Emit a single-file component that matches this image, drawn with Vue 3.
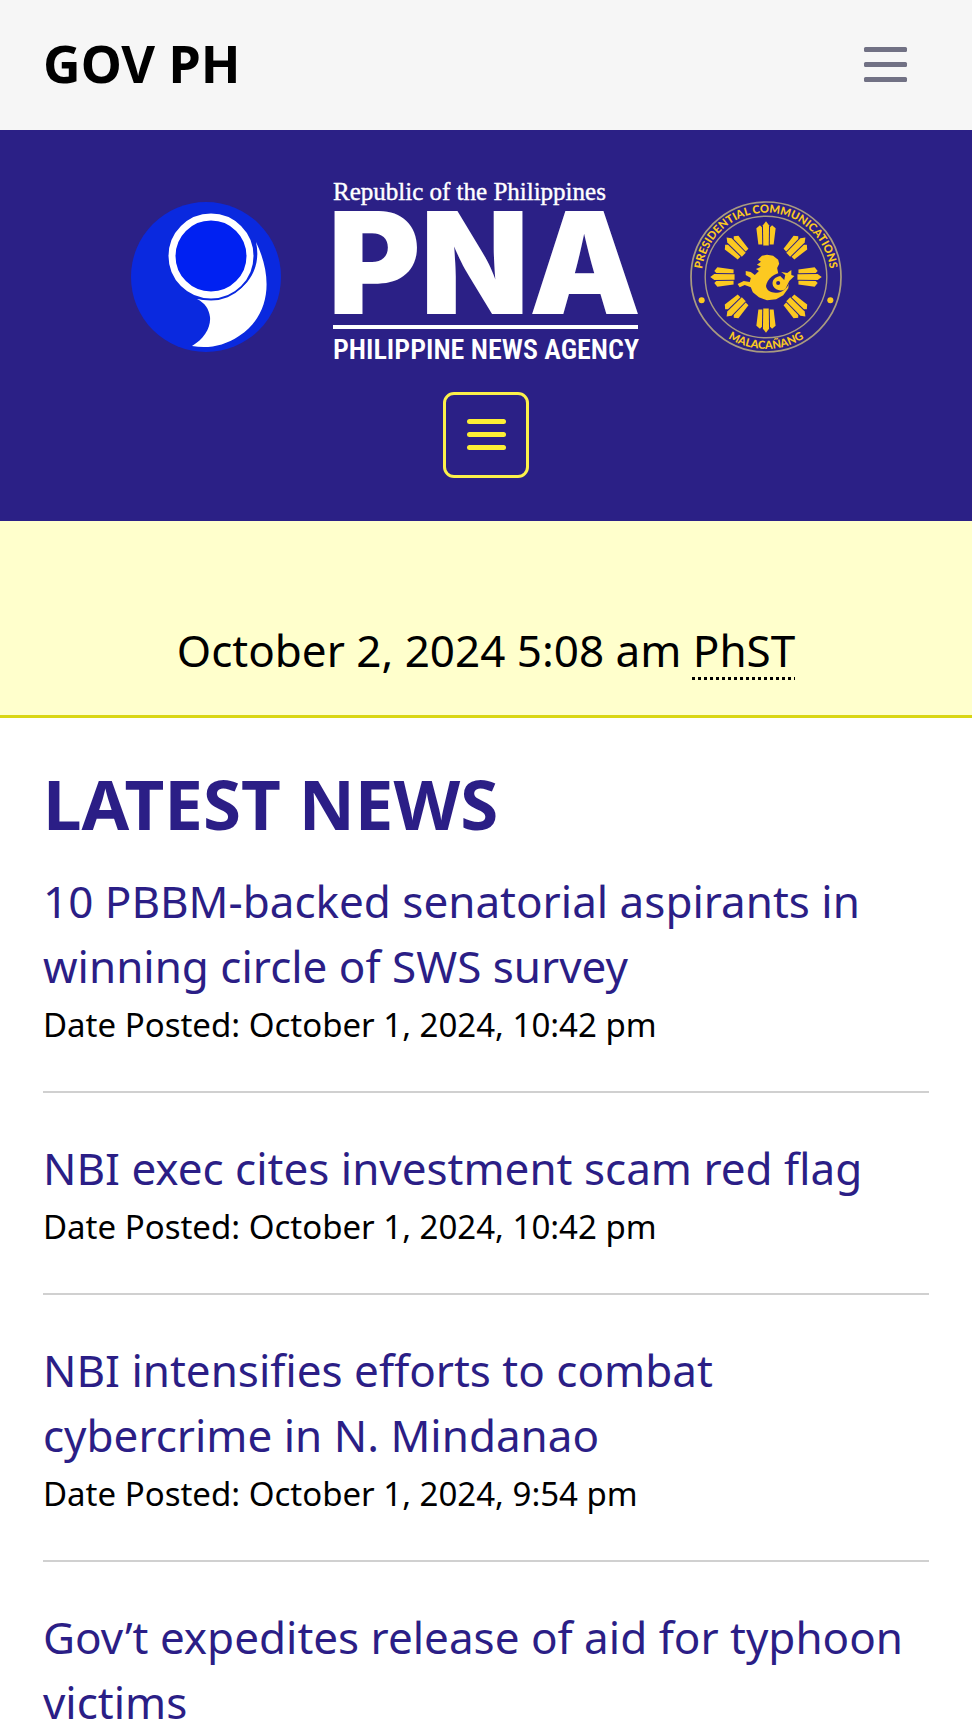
<template>
  <div class="page">
    <!-- Top bar -->
    <header class="topbar">
      <a class="topbar-brand" href="#">GOV PH</a>
      <button class="topbar-toggle" type="button" aria-label="Toggle GOV PH menu" @click="govOpen = !govOpen">
        <svg viewBox="0 0 43 35" width="43" height="35">
          <rect v-for="y in [0, 15, 30]" :key="y" x="0" :y="y" width="43" height="5" rx="1.5" fill="#717184" />
        </svg>
      </button>
    </header>

    <!-- Masthead -->
    <div class="masthead">
      <a class="logos" href="#" aria-label="Philippine News Agency">
        <svg class="emblem" viewBox="0 0 150 150">
          <circle cx="75" cy="75" r="75" fill="#0a29df" />
          <path
            d="M125 40 C142 75 140 113 108 134 C93 144 77 147 61 144 C73 137 80 126 79 115 C78 107 74 101 66 97 C103 103 133 76 125 40 Z"
            fill="#fff"
          />
          <circle cx="80" cy="55" r="43.5" fill="#0a29df" />
          <circle cx="80" cy="54" r="39" fill="#0021f2" stroke="#fff" stroke-width="7" />
        </svg>

        <svg class="wordmark" viewBox="0 0 305 194">
          <g fill="#fff">
            <text class="wm-top" x="0" y="20">Republic of the Philippines</text>
            <text class="wm-main" x="-5" y="134">PNA</text>
            <rect x="0" y="145" width="305" height="4" />
            <text class="wm-bottom" x="0" y="179">PHILIPPINE NEWS AGENCY</text>
          </g>
        </svg>

        <svg class="emblem seal" viewBox="0 0 150 150">
          <defs>
            <path id="seal-top" d="M 11.5 75 A 63.5 63.5 0 0 1 138.500 75" />
            <path id="seal-bottom" d="M 4 75 A 71 71 0 0 0 146 75" />
          </defs>
          <g fill="none" stroke="#a99a80">
            <circle cx="75" cy="75" r="74" stroke-width="1.7" />
            <circle cx="75" cy="75" r="60" stroke-width="1.4" />
          </g>
          <g fill="#fcc921">
            <text class="seal-text" text-anchor="middle">
              <textPath href="#seal-top" startOffset="50%">PRESIDENTIAL COMMUNICATIONS</textPath>
            </text>
            <text class="seal-text" text-anchor="middle">
              <textPath href="#seal-bottom" startOffset="50%">MALACAÑANG</textPath>
            </text>
            <circle cx="11.500" cy="98" r="3" />
            <circle cx="138.500" cy="98" r="3" />
            <!-- sun rays -->
            <g v-for="a in rays" :key="a" :transform="`rotate(${a} 75 75)`">
              <path d="M72.300 44 L72 24 L75 20 L78 24 L77.700 44 Z" />
              <path d="M65.500 27 L69 24 L71 26 L71.300 43 L67.500 43 Z" />
              <path d="M84.500 27 L81 24 L79 26 L78.700 43 L82.500 43 Z" />
            </g>
            <!-- sea lion -->
            <path
              d="M67 58 L71 54 L76 53 L82 54 L87 58 L88 62 L86 66 L87 71 L98 76 L97 86 L92 93 L85 97 L76 98 L68 95 L62 90 L60 85 L54 83 L49 85 L47 82 L53 79 L59 80 L60 76 L55 73 L55 69 L60 70 L64 73 L68 69 L65 67 L70 65 L66 63 L70 60 Z"
            />
            <path
              d="M92 70 C83 71 76 77 75 84 C76 91 85 92 91 89 C96 86 98 82 101 74 Z"
              fill="#2b2086"
            />
            <path d="M82 84 C80 78 84 75 89 74 L93 78 L94 73 L90 70 L96 71 L100 68 L100 73 L103 74 L98 79 L94 87 C90 89 85 89 82 84 Z" />
            <circle cx="87" cy="81" r="2" fill="#2b2086" />
          </g>
        </svg>
      </a>

      <button class="menu-toggle" type="button" aria-label="Toggle main menu" @click="menuOpen = !menuOpen">
        <svg viewBox="0 0 39 32" width="39" height="32">
          <rect v-for="y in [0, 13, 26]" :key="y" x="0" :y="y" width="39" height="5" rx="2.5" fill="#fcee35" />
        </svg>
      </button>
    </div>

    <!-- Philippine standard time -->
    <div class="clock">
      October 2, 2024 5:08 am <abbr title="Philippine Standard Time">PhST</abbr>
    </div>

    <!-- News -->
    <main class="news">
      <h1 class="news-heading">LATEST NEWS</h1>
      <article v-for="item in news" :key="item.title" class="news-item">
        <a class="news-title" href="#">{{ item.title }}</a>
        <p v-if="item.date" class="news-date">Date Posted: {{ item.date }}</p>
      </article>
    </main>
  </div>
</template>

<script setup>
import { ref } from 'vue'

const govOpen = ref(false)
const menuOpen = ref(false)

const rays = [0, 45, 90, 135, 180, 225, 270, 315]

const news = [
  {
    title: '10 PBBM-backed senatorial aspirants in winning circle of SWS survey',
    date: 'October 1, 2024, 10:42 pm'
  },
  {
    title: 'NBI exec cites investment scam red flag',
    date: 'October 1, 2024, 10:42 pm'
  },
  {
    title: 'NBI intensifies efforts to combat cybercrime in N. Mindanao',
    date: 'October 1, 2024, 9:54 pm'
  },
  {
    title: 'Gov’t expedites release of aid for typhoon victims',
    date: ''
  }
]
</script>

<style>
body {
  background: #fff;
}
</style>

<style scoped>
.page {
  font-family: "Noto Sans", "Open Sans", sans-serif;
  color: #000;
}

a {
  text-decoration: none;
}

button {
  background: none;
  border: none;
  padding: 0;
  cursor: pointer;
}

svg {
  display: block;
  overflow: visible;
}

/* Top bar */
.topbar {
  display: flex;
  align-items: center;
  justify-content: space-between;
  height: 130px;
  padding: 0 65px 2px 43px;
  box-sizing: border-box;
  background: #f6f6f6;
}

.topbar-brand {
  padding-bottom: 4px;
  color: #000;
  font-size: 52px;
  font-weight: 700;
  line-height: 65px;
}

/* Masthead */
.masthead {
  display: flex;
  flex-direction: column;
  align-items: center;
  gap: 18px;
  padding: 50px 43px 43px;
  background: #2b2086;
}

.logos {
  display: flex;
  align-items: center;
  justify-content: center;
  gap: 52px;
}

.emblem {
  width: 150px;
  height: 150px;
}

.seal {
  width: 152px;
  height: 152px;
}

.wordmark {
  width: 305px;
  height: 194px;
}

.wm-top {
  font-family: "Liberation Serif", serif;
  font-size: 25px;
  stroke: #fff;
  stroke-width: 0.4px;
}

.wm-main {
  font-family: Inter, sans-serif;
  font-size: 141px;
  font-weight: 900;
}

.wm-bottom {
  font-family: "Liberation Sans Narrow", "Roboto Condensed", "Liberation Sans", sans-serif;
  font-size: 28px;
  font-weight: 600;
}

.seal-text {
  font-family: Lato, sans-serif;
  font-size: 11px;
  font-weight: 900;
}

.menu-toggle {
  display: flex;
  align-items: center;
  justify-content: center;
  width: 86px;
  height: 86px;
  border: 3px solid #fcf04a;
  border-radius: 11px;
}

/* Clock */
.clock {
  padding: 97px 43px 32px;
  background: #ffffcc;
  border-bottom: 3px solid #d9d614;
  font-size: 44px;
  line-height: 65px;
  text-align: center;
}

.clock abbr {
  text-decoration: underline dotted 3px;
  text-underline-offset: 10px;
}

/* News */
.news {
  padding: 42px 43px 0;
}

.news-heading {
  margin: 0;
  color: #2b1e86;
  font-size: 69px;
  font-weight: 700;
  line-height: 86px;
}

.news-item {
  padding: 43px 0 40px;
  border-bottom: 2px solid #d0d0d0;
}

.news-item:first-of-type {
  padding-top: 23px;
}

.news-title {
  display: block;
  color: #2b1e86;
  font-size: 44px;
  line-height: 65px;
}

.news-date {
  margin: 0;
  font-size: 33px;
  line-height: 52px;
}
</style>
